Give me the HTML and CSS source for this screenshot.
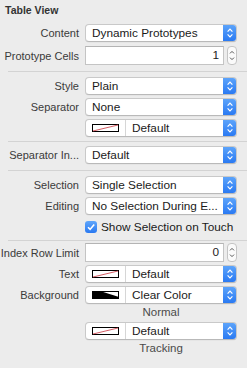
FILE: index.html
```html
<!DOCTYPE html>
<html>
<head>
<meta charset="utf-8">
<link rel="stylesheet" href="styles.css">
</head>
<body>
<div class="panel">
  <div class="title">Table View</div>

  <div class="section s1">
    <div class="label">Content</div>
    <div class="popup"><span class="val">Dynamic Prototypes</span><span class="arrow"><svg viewBox="0 0 14 18" width="14" height="18"><path d="M4.6 7.6 L7 5.2 L9.4 7.6 M4.6 10.4 L7 12.8 L9.4 10.4"/></svg></span></div>
    <div class="label">Prototype Cells</div>
    <div class="stepfield"><div class="field">1</div><div class="stepper"><svg viewBox="0 0 10 19" width="10" height="19"><path d="M3 7.4 L5 5.4 L7 7.4 M3 11.6 L5 13.6 L7 11.6"/></svg></div></div>
  </div>
  <div class="rule"></div>

  <div class="section s2">
    <div class="label">Style</div>
    <div class="popup"><span class="val">Plain</span><span class="arrow"><svg viewBox="0 0 14 18" width="14" height="18"><path d="M4.6 7.6 L7 5.2 L9.4 7.6 M4.6 10.4 L7 12.8 L9.4 10.4"/></svg></span></div>
    <div class="label">Separator</div>
    <div class="popup"><span class="val">None</span><span class="arrow"><svg viewBox="0 0 14 18" width="14" height="18"><path d="M4.6 7.6 L7 5.2 L9.4 7.6 M4.6 10.4 L7 12.8 L9.4 10.4"/></svg></span></div>
    <div class="label"></div>
    <div class="popup"><span class="well"><svg viewBox="0 0 27 8" width="27" height="8"><rect x="0.5" y="0.5" width="26" height="7" fill="#fff" stroke="#000"/><line x1="1" y1="7" x2="26" y2="1" stroke="#c8323c" stroke-width="0.8"/></svg></span><span class="val">Default</span><span class="arrow"><svg viewBox="0 0 14 18" width="14" height="18"><path d="M4.6 7.6 L7 5.2 L9.4 7.6 M4.6 10.4 L7 12.8 L9.4 10.4"/></svg></span></div>
  </div>
  <div class="rule"></div>

  <div class="section s3">
    <div class="label">Separator In...</div>
    <div class="popup"><span class="val">Default</span><span class="arrow"><svg viewBox="0 0 14 18" width="14" height="18"><path d="M4.6 7.6 L7 5.2 L9.4 7.6 M4.6 10.4 L7 12.8 L9.4 10.4"/></svg></span></div>
  </div>
  <div class="rule"></div>

  <div class="section s4">
    <div class="label">Selection</div>
    <div class="popup"><span class="val">Single Selection</span><span class="arrow"><svg viewBox="0 0 14 18" width="14" height="18"><path d="M4.6 7.6 L7 5.2 L9.4 7.6 M4.6 10.4 L7 12.8 L9.4 10.4"/></svg></span></div>
    <div class="label">Editing</div>
    <div class="popup"><span class="val">No Selection During E...</span><span class="arrow"><svg viewBox="0 0 14 18" width="14" height="18"><path d="M4.6 7.6 L7 5.2 L9.4 7.6 M4.6 10.4 L7 12.8 L9.4 10.4"/></svg></span></div>
    <div class="label"></div>
    <div class="check"><span class="box"><svg viewBox="0 0 12 12" width="12" height="12"><path d="M3 6.3 L5.1 8.4 L9.2 3.4"/></svg></span><span class="checktext">Show Selection on Touch</span></div>
  </div>
  <div class="rule"></div>

  <div class="section s5">
    <div class="label">Index Row Limit</div>
    <div class="stepfield"><div class="field">0</div><div class="stepper"><svg viewBox="0 0 10 19" width="10" height="19"><path d="M3 7.4 L5 5.4 L7 7.4 M3 11.6 L5 13.6 L7 11.6"/></svg></div></div>
    <div class="label">Text</div>
    <div class="popup"><span class="well"><svg viewBox="0 0 27 8" width="27" height="8"><rect x="0.5" y="0.5" width="26" height="7" fill="#fff" stroke="#000"/><line x1="1" y1="7" x2="26" y2="1" stroke="#c8323c" stroke-width="0.8"/></svg></span><span class="val">Default</span><span class="arrow"><svg viewBox="0 0 14 18" width="14" height="18"><path d="M4.6 7.6 L7 5.2 L9.4 7.6 M4.6 10.4 L7 12.8 L9.4 10.4"/></svg></span></div>
    <div class="label">Background</div>
    <div class="popup"><span class="well"><svg viewBox="0 0 27 8" width="27" height="8"><rect x="0.5" y="0.5" width="26" height="7" fill="#fff" stroke="#000"/><polygon points="0,0 8,0 27,6 27,8 0,8" fill="#000"/></svg></span><span class="val">Clear Color</span><span class="arrow"><svg viewBox="0 0 14 18" width="14" height="18"><path d="M4.6 7.6 L7 5.2 L9.4 7.6 M4.6 10.4 L7 12.8 L9.4 10.4"/></svg></span></div>
    <div class="label"></div>
    <div class="caption">Normal</div>
    <div class="label"></div>
    <div class="popup"><span class="well"><svg viewBox="0 0 27 8" width="27" height="8"><rect x="0.5" y="0.5" width="26" height="7" fill="#fff" stroke="#000"/><line x1="1" y1="7" x2="26" y2="1" stroke="#c8323c" stroke-width="0.8"/></svg></span><span class="val">Default</span><span class="arrow"><svg viewBox="0 0 14 18" width="14" height="18"><path d="M4.6 7.6 L7 5.2 L9.4 7.6 M4.6 10.4 L7 12.8 L9.4 10.4"/></svg></span></div>
    <div class="label"></div>
    <div class="caption">Tracking</div>
  </div>
</div>
</body>
</html>
```

FILE: styles.css
```css
html, body {
  margin: 0;
  padding: 0;
  background: #ececec;
}
body {
  font-family: "Liberation Sans", Arial, sans-serif;
  color: #1c1c1c;
  width: 247px;
  height: 368px;
  overflow: hidden;
}
.panel {
  display: flex;
  flex-direction: column;
}
.title {
  font-weight: bold;
  font-size: 10.5px;
  line-height: 14px;
  padding: 3px 0 0 5px;
  color: #333;
  height: 17px;
  box-sizing: border-box;
}
.section {
  display: grid;
  grid-template-columns: 79px 152px;
  column-gap: 6px;
  row-gap: 3px;
  align-items: center;
}
.s1 { padding: 7px 0 6px; row-gap: 4px; }
.s2 { padding: 5px 0 4px; }
.s3 { padding: 4px 0 6px; }
.s4 { padding: 5px 0 4px; }
.s5 { padding: 2px 0 0; }
.rule {
  height: 1px;
  background: #d3d3d3;
  margin-left: 8px;
}
.label {
  font-size: 11px;
  text-align: right;
  color: #3a3a3a;
  white-space: nowrap;
  line-height: 14px;
}
.popup {
  height: 18px;
  box-sizing: border-box;
  background: #fff;
  border: 1px solid #c9c9c9;
  border-bottom-color: #b9b9b9;
  border-radius: 4px;
  display: flex;
  align-items: center;
  box-shadow: 0 0.5px 0.5px rgba(0,0,0,0.06);
  overflow: hidden;
}
.val {
  flex: 1;
  font-size: 11.8px;
  padding-left: 6px;
  white-space: nowrap;
  color: #1a1a1a;
  line-height: 16px;
}
.arrow {
  width: 14px;
  height: 18px;
  margin: -1px -1px -1px 0;
  background: linear-gradient(#5fa6fb, #2777f2);
  border-radius: 0 4px 4px 0;
  display: flex;
}
.arrow path {
  fill: none;
  stroke: #fff;
  stroke-width: 1.2;
}
.well {
  width: 39px;
  height: 16px;
  border-right: 1px solid #d6d6d6;
  display: flex;
  align-items: center;
  justify-content: center;
  flex: none;
}
.stepfield {
  display: flex;
  align-items: center;
  gap: 3px;
}
.field {
  width: 139px;
  height: 19px;
  box-sizing: border-box;
  background: #fff;
  border: 1px solid #c4c4c4;
  border-top-color: #b4b4b4;
  font-size: 11.8px;
  text-align: right;
  padding-right: 4px;
  line-height: 17px;
}
.stepper {
  width: 10px;
  height: 19px;
  box-sizing: border-box;
  border: 1px solid #c4c4c4;
  border-radius: 4px;
  background: #fafafa;
  display: flex;
  align-items: center;
  justify-content: center;
}
.stepper svg { margin: -1px; flex: none; }
.stepper path {
  fill: none;
  stroke: #555;
  stroke-width: 1;
}
.check {
  display: flex;
  align-items: center;
  gap: 4px;
  height: 18px;
}
.box {
  width: 12px;
  height: 12px;
  border-radius: 3px;
  background: linear-gradient(#5fa6fb, #2a79f1);
  display: flex;
}
.box path {
  fill: none;
  stroke: #fff;
  stroke-width: 1.6;
}
.checktext {
  font-size: 11.8px;
  color: #1a1a1a;
  white-space: nowrap;
}
.caption {
  font-size: 11.5px;
  color: #4a4a4a;
  text-align: center;
  line-height: 14px;
  margin-top: -2px;
}
```
